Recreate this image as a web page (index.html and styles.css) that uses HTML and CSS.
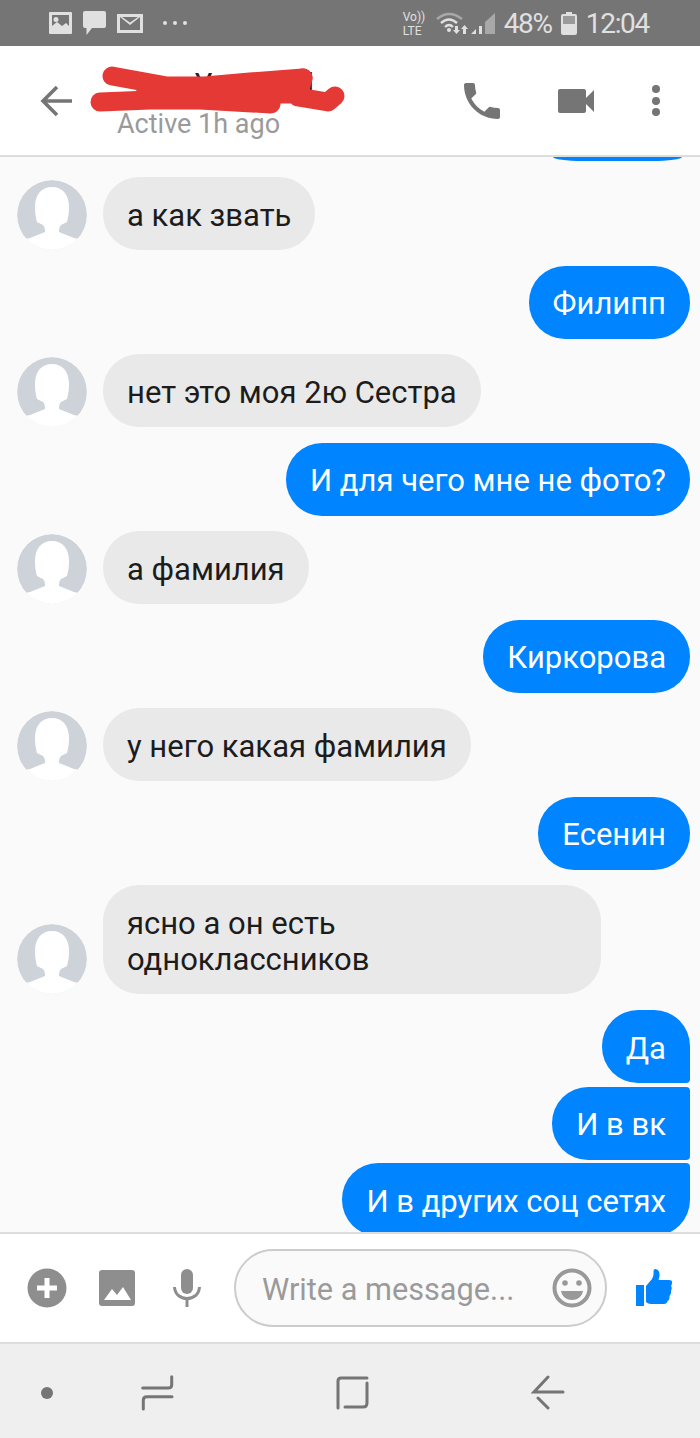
FILE: index.html
```html
<!DOCTYPE html>
<html lang="en">
<head>
  <meta charset="UTF-8">
  <title>Messenger chat</title>
  <link rel="stylesheet" href="styles.css">
</head>
<body>
  <svg class="defs" width="0" height="0">
    <symbol id="avatar" viewBox="0 0 70 70">
      <circle cx="35" cy="35" r="35" fill="#ced3da"/>
      <path fill="#fff" d="M35 7C24 7 18 15 18 27C18 34 19 38 20 42L26 45C28 47 28 50 28 52L13 58L3 60L8 70H62L67 60L57 58L42 52C42 50 42 47 44 45L50 42C51 38 52 34 52 27C52 15 46 7 35 7Z"/>
    </symbol>
  </svg>

  <div class="phone">
    <div class="status-bar">
      <div class="status-left">
        <svg width="23" height="22" viewBox="0 0 23 22"><path fill="#e0e0e0" fill-rule="evenodd" d="M1 0H22A1 1 0 0 1 23 1V21A1 1 0 0 1 22 22H1A1 1 0 0 1 0 21V1A1 1 0 0 1 1 0ZM3 3V14L8 10L13 14L17 11L20 14V3ZM7 5A2.500 2.500 0 1 1 7 10A2.500 2.500 0 1 1 7 5Z"/></svg>
        <svg width="23" height="24" viewBox="0 0 23 24"><path fill="#e0e0e0" d="M2 0H21A2 2 0 0 1 23 2V15A2 2 0 0 1 21 17H9L3.500 24V17H2A2 2 0 0 1 0 15V2A2 2 0 0 1 2 0Z"/></svg>
        <svg width="26" height="19" viewBox="0 0 26 19"><path fill="#e0e0e0" fill-rule="evenodd" d="M0 0H26V19H0ZM3 3V16H23V3L13 11ZM5 3L13 8.500L21 3Z"/></svg>
        <div class="status-dots"><span></span><span></span><span></span></div>
      </div>
      <div class="status-right">
        <div class="volte"><span>Vo))</span><span>LTE</span></div>
        <svg class="net" width="60" height="24" viewBox="0 0 60 24">
          <g fill="none" stroke="#e0e0e0" stroke-width="2.400">
            <path stroke="#a8a8a8" d="M1 8Q13 -2 26 8"/>
            <path d="M5 12Q13 5 21 12"/>
            <path d="M9 16Q13 12 17 16"/>
          </g>
          <circle cx="13" cy="19" r="2" fill="#e0e0e0"/>
          <path fill="#e0e0e0" d="M19 15H22V19H24L20.500 23L17 19H19ZM27 23V18H25L28.500 14L32 18H30V23Z"/>
          <path fill="#e0e0e0" d="M35 23L40 18V23ZM43 15H46V23H43Z"/>
          <path fill="#a8a8a8" d="M49 11L59 2V23H49Z"/>
        </svg>
        <span class="status-text">48%</span>
        <svg class="battery" width="16" height="23" viewBox="0 0 16 23"><path fill="#e0e0e0" d="M5 0H11V2H14A2 2 0 0 1 16 4V21A2 2 0 0 1 14 23H2A2 2 0 0 1 0 21V4A2 2 0 0 1 2 2H5Z"/><rect x="2" y="4" width="12" height="8" fill="#9a9a9a"/></svg>
        <span class="status-text">12:04</span>
      </div>
    </div>

    <header class="chat-header">
      <svg class="back" width="34" height="34" viewBox="0 0 34 34"><path fill="none" stroke="#757575" stroke-width="3.600" d="M33 17H5M18 3L4 17L18 31"/></svg>
      <div class="title">
        <div class="name"><span>У</span><span>d</span></div>
        <div class="active">Active 1h ago</div>
      </div>
      <svg class="call" width="36" height="36" viewBox="3 3 18 18"><path fill="#757575" d="M6.620 10.790c1.440 2.830 3.760 5.140 6.590 6.590l2.200-2.200c.270-.270.670-.360 1.020-.240 1.120.370 2.330.570 3.570.570.550 0 1 .450 1 1V20c0 .550-.450 1-1 1-9.390 0-17-7.610-17-17 0-.550.450-1 1-1h3.500c.550 0 1 .450 1 1 0 1.250.200 2.450.570 3.570.110.350.030.740-.250 1.020l-2.200 2.200z"/></svg>
      <svg class="video" width="36" height="24" viewBox="3 6 18 12"><path fill="#757575" d="M17 10.500V7c0-.550-.450-1-1-1H4c-.550 0-1 .450-1 1v10c0 .550.450 1 1 1h12c.550 0 1-.450 1-1v-3.500l4 4v-11l-4 4z"/></svg>
      <div class="more"><span></span><span></span><span></span></div>
      <svg class="scribble" width="350" height="60" viewBox="90 60 350 60">
        <g fill="none" stroke="#e53935" stroke-width="19" stroke-linecap="round" stroke-linejoin="round">
          <path d="M112 76L167 86L205 86L250 82L303 78"/>
          <path d="M145 94H300"/>
          <path d="M100 102L150 100L200 100L271 104"/>
          <path d="M303 78L298 97L328 102L335 96"/>
        </g>
      </svg>
    </header>

    <main class="messages">
      <div class="stub"></div>

      <div class="row">
        <svg class="avatar"><use href="#avatar"/></svg>
        <div class="bubble them">а как звать</div>
      </div>
      <div class="row me"><div class="bubble mine">Филипп</div></div>
      <div class="row">
        <svg class="avatar"><use href="#avatar"/></svg>
        <div class="bubble them">нет это моя 2ю Сестра</div>
      </div>
      <div class="row me"><div class="bubble mine">И для чего мне не фото?</div></div>
      <div class="row">
        <svg class="avatar"><use href="#avatar"/></svg>
        <div class="bubble them">а фамилия</div>
      </div>
      <div class="row me"><div class="bubble mine">Киркорова</div></div>
      <div class="row">
        <svg class="avatar"><use href="#avatar"/></svg>
        <div class="bubble them">у него какая фамилия</div>
      </div>
      <div class="row me"><div class="bubble mine">Есенин</div></div>
      <div class="row">
        <svg class="avatar"><use href="#avatar"/></svg>
        <div class="bubble them wide">ясно а он есть<br>одноклассников</div>
      </div>

      <div class="group">
        <div class="row me"><div class="bubble mine first">Да</div></div>
        <div class="row me"><div class="bubble mine middle">И в вк</div></div>
        <div class="row me"><div class="bubble mine last">И в других соц сетях</div></div>
      </div>
    </main>

    <footer class="composer">
      <svg class="c-plus" width="40" height="40" viewBox="0 0 40 40"><circle cx="20" cy="20" r="19.500" fill="#8e8e8e"/><path stroke="#fff" stroke-width="5" d="M20 10V30M10 20H30"/></svg>
      <svg class="c-image" width="36" height="36" viewBox="0 0 36 36"><rect width="36" height="36" rx="3" fill="#8e8e8e"/><path fill="#fff" d="M5 30L13 19L18 25L24 17L32 30Z"/></svg>
      <svg class="c-mic" width="28" height="38" viewBox="0 0 28 38"><rect x="8" y="0" width="12" height="25" rx="6" fill="#8e8e8e"/><path fill="none" stroke="#8e8e8e" stroke-width="3" d="M1.500 18C2 26 8 29.500 14 29.500C20 29.500 26 26 26.500 18M14 29V38"/></svg>
      <div class="input">
        <span class="placeholder">Write a message...</span>
        <svg width="40" height="40" viewBox="0 0 40 40"><circle cx="20" cy="20" r="17.500" fill="none" stroke="#999" stroke-width="4"/><circle cx="13" cy="15" r="2.800" fill="#999"/><circle cx="27" cy="15" r="2.800" fill="#999"/><path fill="#999" d="M9 23H31C30 29 25 32 20 32C15 32 10 29 9 23Z"/></svg>
      </div>
      <svg class="c-like" width="40" height="40" viewBox="0 0 40 40"><rect x="2" y="17" width="8" height="21" fill="#0084ff"/><path fill="#0084ff" d="M12 18L18 11Q20 8 19.500 3Q19.500 1 21.500 1Q26 1.500 25.500 8L24.500 12H35Q38.500 12 38 15Q38 17 37 18Q38.500 20 37 23Q37.500 26 35.500 28Q36 32 33.500 33Q33 36 30 36H17Q14 36 12 34Z"/></svg>
    </footer>

    <nav class="nav-bar">
      <span class="nav-dot"></span>
      <svg class="nav-recent" width="35" height="38" viewBox="0 0 35 38"><path d="M31.700 2.700V11Q31.700 14 28 14H2.700M32 22.700H7Q3.300 22.700 3.300 26V35"/></svg>
      <svg class="nav-home" width="35" height="35" viewBox="0 0 35 35"><path d="M3 32V5Q3 2 6 2H32M32 7V27Q32 31 28 31H10"/></svg>
      <svg class="nav-back" width="35" height="36" viewBox="0 0 35 36"><path d="M17 2L3 17H32M7 23L17 33"/></svg>
    </nav>
  </div>
</body>
</html>
```

FILE: styles.css
```css
* {
  box-sizing: border-box;
}
body {
  margin: 0;
  font-family: Roboto, "Noto Sans", sans-serif;
  background: #fafafa;
}
.defs {
  display: block;
  height: 0;
}
.phone {
  width: 700px;
  height: 1438px;
  display: flex;
  flex-direction: column;
  overflow: hidden;
}

/* status bar */
.status-bar {
  height: 46px;
  flex: none;
  background: #757575;
  display: flex;
  align-items: center;
  justify-content: space-between;
  padding: 0 51px 0 49px;
  color: #e0e0e0;
}
.status-left {
  display: flex;
  align-items: center;
  gap: 11px;
}
.status-dots {
  display: flex;
  gap: 6px;
  margin-left: 9px;
}
.status-dots span {
  width: 4px;
  height: 4px;
  border-radius: 50%;
  background: #e0e0e0;
}
.status-right {
  display: flex;
  align-items: center;
}
.volte {
  display: flex;
  flex-direction: column;
  font-size: 12px;
  line-height: 14px;
  width: 33px;
  padding-top: 1px;
}
.net {
  margin-right: 8px;
}
.status-text {
  font-size: 28px;
  line-height: 36px;
  padding-top: 2px;
  letter-spacing: -1.300px;
}
.battery {
  margin: 0 9px;
}

/* header */
.chat-header {
  position: relative;
  height: 111px;
  flex: none;
  background: #fff;
  border-bottom: 2px solid #ddd;
  display: flex;
  align-items: center;
  padding: 0 39px;
}
.back {
  flex: none;
}
.title {
  margin-left: 44px;
  width: 347px;
  padding-top: 12px;
}
.name {
  display: flex;
  height: 35px;
  gap: 84px;
  padding-left: 77px;
  font-size: 30px;
  line-height: 21px;
  color: #222;
}
.active {
  font-size: 27px;
  line-height: 32px;
  color: #9a9a9a;
}
.video {
  margin-left: 58px;
}
.more {
  margin-left: 58px;
  display: flex;
  flex-direction: column;
  gap: 3.500px;
}
.more span {
  width: 8px;
  height: 8px;
  border-radius: 50%;
  background: #757575;
}
.scribble {
  position: absolute;
  left: 90px;
  top: 14px;
}

/* messages */
.messages {
  flex: 1;
  min-height: 0;
  overflow: hidden;
  background: #fafafa;
  display: flex;
  flex-direction: column;
  gap: 15.500px;
  padding: 0 10px 0 17px;
}
.stub {
  flex: none;
  align-self: flex-end;
  width: 129px;
  height: 4px;
  margin-right: 8px;
  background: #0084ff;
  border-radius: 0 0 30px 30px / 0 0 4px 4px;
  margin-bottom: 0.700px;
}
.row {
  flex: none;
  display: flex;
  align-items: flex-end;
  gap: 15px;
}
.row.me {
  justify-content: flex-end;
}
.avatar {
  width: 70px;
  height: 70px;
  flex: none;
  border-radius: 50%;
  margin-right: 1px;
}
.bubble {
  font-size: 31px;
  line-height: 36px;
  padding: 20.500px 24px 16.500px;
  border-radius: 36px;
  white-space: nowrap;
}
.them {
  background: #e9e9e9;
  color: #1c1c1c;
}
.them.wide {
  width: 498px;
}
.mine {
  background: #0084ff;
  color: #fff;
}
.group {
  flex: none;
  display: flex;
  flex-direction: column;
  gap: 3.500px;
  margin-top: 0.600px;
}
.mine.first {
  border-bottom-right-radius: 4px;
}
.mine.middle {
  border-top-right-radius: 4px;
  border-bottom-right-radius: 4px;
}
.mine.last {
  border-top-right-radius: 4px;
}

/* composer */
.composer {
  height: 112px;
  flex: none;
  background: #fff;
  border-top: 2px solid #ddd;
  border-bottom: 2px solid #ddd;
  display: flex;
  align-items: center;
  padding: 0 0 0 27px;
}
.c-image {
  margin-left: 32px;
}
.c-mic {
  margin-left: 38px;
}
.input {
  width: 373px;
  height: 78px;
  margin-left: 33px;
  border: 2px solid #ccc;
  border-radius: 39px;
  background: #fafafa;
  display: flex;
  align-items: center;
  justify-content: space-between;
  padding: 0 13px 0 26px;
}
.placeholder {
  font-size: 30.700px;
  color: #9a9a9a;
  padding-top: 2px;
}
.c-like {
  margin-left: 27px;
}

/* nav bar */
.nav-bar {
  height: 94px;
  flex: none;
  background: #efefef;
  display: flex;
  align-items: center;
  padding: 4px 0 0 41px;
}
.nav-bar svg {
  fill: none;
  stroke: #757575;
  stroke-width: 3;
  stroke-linecap: round;
}
.nav-dot {
  width: 12px;
  height: 12px;
  border-radius: 50%;
  background: #757575;
}
.nav-recent {
  margin-left: 87px;
}
.nav-home {
  margin-left: 160px;
}
.nav-back {
  margin-left: 161px;
}
```
